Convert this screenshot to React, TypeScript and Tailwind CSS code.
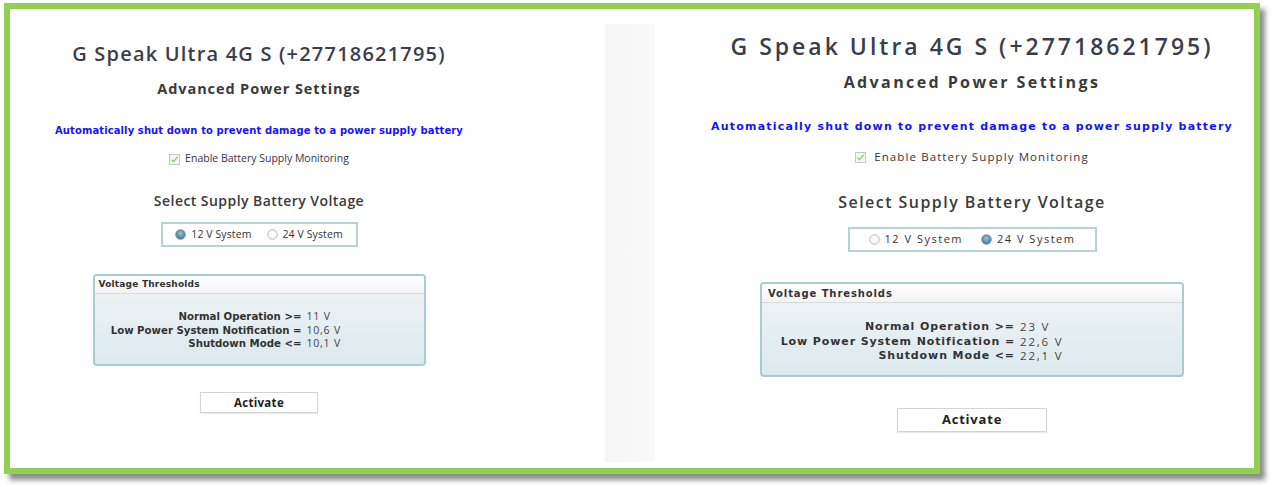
import React from "react";

type Cfg = {
  col: string;
  title: string;
  adv: string;
  blue: string;
  chkRow: string;
  chkText: string;
  select: string;
  radioBox: string;
  radioText: string;
  radioGap: string;
  thBox: string;
  thHead: string;
  thBody: string;
  thLabel: string;
  thValue: string;
  thRow: string;
  btn: string;
  twelve: boolean;
  values: [string, string, string];
};

const left: Cfg = {
  col: "w-[498px] pt-[33px]",
  title: "text-[20px] leading-[24px] font-semibold tracking-[1.2px]",
  adv: "mt-[13px] text-[14.5px] leading-[20px] font-bold tracking-[0.9px]",
  blue: "mt-[25px] text-[10px] leading-[14px] tracking-[0.1px]",
  chkRow: "mt-[14px] h-[14px] gap-[5px]",
  chkText: "text-[10.5px]",
  select: "mt-[25px] text-[14px] leading-[20px] font-semibold tracking-[0.45px]",
  radioBox: "mt-[11px] w-[197px] h-[25px]",
  radioText: "text-[10.5px] tracking-[0.1px]",
  radioGap: "w-[5px]",
  thBox: "mt-[27px] w-[333px] h-[92px]",
  thHead: "h-[18px] text-[9px] pl-[4px] tracking-[0.2px]",
  thBody: "pt-[16px]",
  thLabel: "w-[207px] text-[10.2px]",
  thValue: "pl-[5px] text-[10.5px] tracking-[0.8px]",
  thRow: "h-[13.5px] leading-[13.5px]",
  btn: "mt-[26px] w-[118px] h-[21px] text-[11.5px] tracking-[0.3px]",
  twelve: true,
  values: ["11 V", "10,6 V", "10,1 V"],
};

const right: Cfg = {
  col: "w-[564px] pt-[24px]",
  title: "text-[23px] leading-[26px] font-semibold tracking-[3px]",
  adv: "mt-[13px] text-[16px] leading-[20px] font-bold tracking-[2.4px]",
  blue: "mt-[28px] text-[11px] leading-[14px] tracking-[1.2px]",
  chkRow: "mt-[16px] h-[14px] gap-[8px]",
  chkText: "text-[11.5px] tracking-[1.1px]",
  select: "mt-[28px] text-[16px] leading-[20px] font-semibold tracking-[1.45px]",
  radioBox: "mt-[15px] w-[249px] h-[25px]",
  radioText: "text-[11px] tracking-[1.5px]",
  radioGap: "w-[8px]",
  thBox: "mt-[30px] w-[424px] h-[95px]",
  thHead: "h-[19px] text-[10px] pl-[6px] tracking-[0.9px]",
  thBody: "pt-[17px]",
  thLabel: "w-[253px] text-[11px] tracking-[0.9px]",
  thValue: "pl-[5px] text-[11.5px] tracking-[1.8px]",
  thRow: "h-[14.5px] leading-[14.5px]",
  btn: "mt-[31px] w-[150px] h-[24px] text-[13px] tracking-[0.8px]",
  twelve: false,
  values: ["23 V", "22,6 V", "22,1 V"],
};

const sans = "font-['Open_Sans',sans-serif]";
const tah = "font-['DejaVu_Sans',sans-serif]";

function Radio({ on }: { on: boolean }) {
  return (
    <svg width="11" height="11" viewBox="0 0 11 11" className="shrink-0">
      <defs>
        <radialGradient id={on ? "rg-on" : "rg-off"} cx="50%" cy="40%" r="60%">
          <stop offset="0%" stopColor={on ? "#9cc3d6" : "#ffffff"} />
          <stop offset="100%" stopColor={on ? "#3f7290" : "#f2f2f2"} />
        </radialGradient>
      </defs>
      <circle cx="5.5" cy="5.5" r="4.8" fill={`url(#${on ? "rg-on" : "rg-off"})`} stroke={on ? "#6d95ab" : "#b5b5b5"} strokeWidth="0.9" />
    </svg>
  );
}

function Check() {
  return (
    <svg width="11" height="11" viewBox="0 0 11 11" className="shrink-0">
      <rect x="0.5" y="0.5" width="10" height="10" fill="#f4f6f4" stroke="#c4c9c4" />
      <path d="M2.3 5.6 L4.4 7.8 L8.8 2.8" fill="none" stroke="#8fcf7a" strokeWidth="1.3" />
    </svg>
  );
}

function Panel({ c }: { c: Cfg }) {
  return (
    <div className={`flex flex-col items-center ${c.col}`}>
      <div className={`${sans} ${c.title} text-[#3b3d4a] whitespace-nowrap`}>
        G Speak Ultra 4G S (+27718621795)
      </div>
      <div className={`${sans} ${c.adv} text-[#3a3a3a] whitespace-nowrap`}>Advanced Power Settings</div>
      <div className={`${tah} ${c.blue} font-bold text-[#1414ff] whitespace-nowrap`}>
        Automatically shut down to prevent damage to a power supply battery
      </div>
      <div className={`flex items-center ${c.chkRow}`}>
        <Check />
        <span className={`${sans} ${c.chkText} text-[#3a3440] whitespace-nowrap`}>Enable Battery Supply Monitoring</span>
      </div>
      <div className={`${sans} ${c.select} text-[#3a3a3a] whitespace-nowrap`}>Select Supply Battery Voltage</div>
      <div className={`flex items-center justify-center gap-[5px] border-2 border-[#b7d2d6] bg-white ${c.radioBox}`}>
        <Radio on={c.twelve} />
        <span className={`${sans} ${c.radioText} text-[#333] whitespace-nowrap`}>12 V System</span>
        <span className={c.radioGap} />
        <Radio on={!c.twelve} />
        <span className={`${sans} ${c.radioText} text-[#333] whitespace-nowrap`}>24 V System</span>
      </div>
      <div className={`flex flex-col rounded-[4px] border-2 border-[#a9cbd2] overflow-hidden bg-gradient-to-b from-[#f1f5f6] to-[#dce9ee] ${c.thBox}`}>
        <div className={`${tah} ${c.thHead} flex items-center font-bold text-[#333] bg-gradient-to-b from-white to-[#f3f3f3] border-b border-[#d6dcdc]`}>
          Voltage Thresholds
        </div>
        <div className={`flex flex-col ${c.thBody}`}>
          {[
            ["Normal Operation >=", c.values[0]],
            ["Low Power System Notification =", c.values[1]],
            ["Shutdown Mode <=", c.values[2]],
          ].map(([l, v]) => (
            <div key={l} className={`flex ${c.thRow}`}>
              <span className={`${tah} ${c.thLabel} text-right font-bold text-[#333] whitespace-nowrap`}>{l}</span>
              <span className={`${sans} ${c.thValue} text-[#444] whitespace-nowrap`}>{v}</span>
            </div>
          ))}
        </div>
      </div>
      <div className={`${sans} ${c.btn} flex items-center justify-center font-bold text-[#222] bg-white border border-[#d4d4d4] shadow-[0_1px_1px_rgba(0,0,0,0.08)]`}>
        Activate
      </div>
    </div>
  );
}

export default function App() {
  return (
    <div className="w-[1273px] h-[487px] bg-white pl-[4px] pt-[3px]">
      <div className="w-[1256px] h-[471px] border-[6px] border-[#92d050] bg-white shadow-[5px_6px_5px_rgba(0,0,0,0.45)] flex">
        <div className="flex">
          <Panel c={left} />
        </div>
        <div className="ml-[97px] mt-[15px] w-[50px] h-[438px] bg-gradient-to-r from-[#f6f6f6] to-[#f9f9f9]" />
        <div className="pl-[35px] flex">
          <Panel c={right} />
        </div>
      </div>
    </div>
  );
}
